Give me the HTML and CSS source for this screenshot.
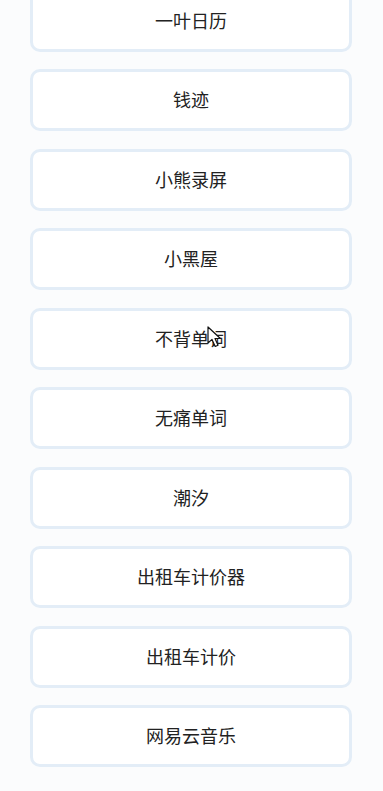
FILE: index.html
```html
<!DOCTYPE html>
<html lang="zh">
<head>
<meta charset="utf-8">
<link rel="stylesheet" href="styles.css">
</head>
<body>
<div class="list">
  <div class="card">一叶日历</div>
  <div class="card">钱迹</div>
  <div class="card">小熊录屏</div>
  <div class="card">小黑屋</div>
  <div class="card">不背单词</div>
  <div class="card">无痛单词</div>
  <div class="card">潮汐</div>
  <div class="card">出租车计价器</div>
  <div class="card">出租车计价</div>
  <div class="card">网易云音乐</div>
</div>
<svg class="cursor" width="16" height="22" viewBox="0 0 16 22">
  <path d="M1 1 L1 17 L5 13.4 L8.2 20.5 L11 19.3 L8 12.5 L13.4 12.5 Z" fill="#fff" stroke="#111" stroke-width="1.2" stroke-linejoin="round"/>
</svg>
</body>
</html>
```
FILE: styles.css
```css
html, body {
  margin: 0;
  padding: 0;
  background: #fbfcfd;
  overflow: hidden;
}
body {
  width: 383px;
  height: 791px;
  position: relative;
  font-family: "Noto Sans CJK SC", "Noto Sans", sans-serif;
}
.list {
  display: flex;
  flex-direction: column;
  gap: 17.5px;
  margin-top: -10.5px;
  padding: 0 31px 0 30px;
}
.card {
  box-sizing: border-box;
  height: 62px;
  padding-bottom: 2px;
  border: 3px solid #e3edf7;
  border-radius: 10px;
  background: #fff;
  display: flex;
  align-items: center;
  justify-content: center;
  font-size: 18px;
  color: #222;
}
.cursor {
  position: absolute;
  left: 207px;
  top: 326px;
}
```
